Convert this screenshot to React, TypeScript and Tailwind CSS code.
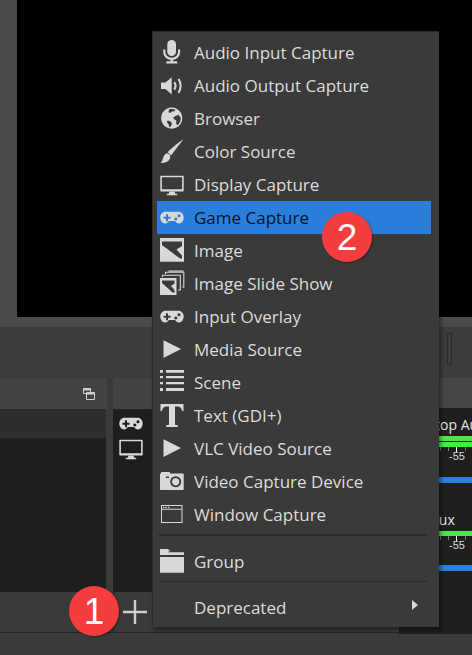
import React from 'react';

const fontFamily = "font-['Open_Sans','Noto_Sans',sans-serif]";

const Svg: React.FC<{ children: React.ReactNode; className?: string }> = ({ children, className }) => (
  <svg
    width="24"
    height="24"
    viewBox="0 0 24 24"
    className={`overflow-visible shrink-0 ${className ?? 'fill-[#d8d8d8]'}`}
  >
    {children}
  </svg>
);

const MicIcon = () => (
  <Svg>
    <rect x="7.3" y="-1" width="8.7" height="16" rx="4.3" />
    <path d="M4.3 8.5v2.5c0 4 3.2 6.8 7.4 6.8s7.4-2.8 7.4-6.8V8.5" fill="none" stroke="#d8d8d8" strokeWidth="2.2" />
    <rect x="10.6" y="17" width="2.2" height="4" />
    <rect x="6.3" y="20.3" width="11" height="2.2" rx="0.6" />
  </Svg>
);

const SpeakerIcon = () => (
  <Svg>
    <path d="M1 8.5h4.5L11.7 3.2v17.4L5.5 15H1z" />
    <path d="M14.2 8.2c1.6 2.2 1.6 5.2 0 7.4M18.4 4.8c3 4 3 10 0 14" fill="none" stroke="#d8d8d8" strokeWidth="2" />
  </Svg>
);

const GlobeIcon = () => (
  <Svg>
    <path
      fillRule="evenodd"
      d="M11.7 .5a10.6 10.6 0 1 0 .01 0zM9 2.5c2-.6 5-.6 6.5.3l-1.5 1.6-2-.2-1 1.5-2.5-.3zM15.5 9l3-1.2 2.2 2.7c.2 3-.8 5.7-3 7.6l-1.7-1.3.5-3-2-1.2-1.5-1.8zM7.5 13.5l2.8.7 1.7 2.3-1 2.5-1.5 1.5-1-3.5-1.5-1.5z"
    />
  </Svg>
);

const BrushIcon = () => (
  <Svg>
    <path d="M23.5-.8C19 5 14.5 11 11.2 15.2L7.6 12.2C12 8 18.5 2.2 23.5-.8z" />
    <path d="M6.6 13.2c2.4.2 4 1.8 3.6 4.3-.7 4-5 5.7-9.7 5.6 2.8-2 2-8 6.1-9.9z" />
  </Svg>
);

const MonitorIcon = () => (
  <Svg>
    <path
      fillRule="evenodd"
      d="M1 2.7h22a.7.7 0 0 1 .7.7v14.400a.7.7 0 0 1-.7.7H1a.7.7 0 0 1-.7-.7V3.400a.7.7 0 0 1 .7-.7zM1.900 4.200v12.100h20.200V4.200z"
    />
    <path d="M9.500 18.500h5l.8 2.300H8.700zM6.800 20.800h10.400v1.400H6.800z" />
  </Svg>
);

const GamepadIcon = () => (
  <Svg>
    <path
      fillRule="evenodd"
      d="M5.500 5.700h13c3 0 5.200 2.500 5.200 5.900s-2.200 5.900-4.700 5.900c-2 0-3-1.500-4-2.500H9c-1 1-2 2.500-4 2.500-2.500 0-4.700-2.500-4.700-5.900s2.200-5.900 5.200-5.900zM6 8.200v2.500H3.500v2h2.500v2.500h2v-2.500h2.500v-2H8V8.200zM19 8.200a1.600 1.600 0 1 0 .01 0zM15.800 11.400a1.600 1.600 0 1 0 .01 0z"
    />
  </Svg>
);

const ImageIcon = () => (
  <Svg>
    <path
      fillRule="evenodd"
      d="M0-1h24v23.700H0zM2 2.500v3.500L20 19.500h2v-3L16.500 10.500 22 7V2.500z"
    />
  </Svg>
);

const SlidesIcon = () => (
  <Svg>
    <path fillRule="evenodd" d="M0 6h16.500v17H0zM2 8.500v2.500L12.500 20.500h2v-2.500l-3.500-4 3.500-2.500V8.500z" />
    <path d="M2.500 5V3.200h17.800V18H18M5.500 2V.2h18.300V15h-1.600M8.500-1h15" fill="none" stroke="#d8d8d8" strokeWidth="1.100" />
  </Svg>
);

const PlayIcon = () => (
  <Svg>
    <path d="M3.500 2.300L21 11 3.500 20z" />
  </Svg>
);

const ListIcon = () => (
  <Svg>
    <path d="M0-1h3v2.700H0zM0 5h3v2.300H0zM0 11h3v2.300H0zM0 17h3v3H0z" />
    <path d="M6-1h18v2.700H6zM6 5h18v2.300H6zM6 11h18v2.300H6zM6 17h18v3H6z" />
  </Svg>
);

const TextIcon = () => (
  <Svg>
    <path d="M.5 0h23v7h-1.400c-.5-2.500-1.500-4.200-4-4.600H15v18.400l3 .6V23H6v-1.600l3-.6V2.400H5.900c-2.500.4-3.500 2.100-4 4.600H.5z" />
  </Svg>
);

const CameraIcon = () => (
  <Svg>
    <path
      fillRule="evenodd"
      d="M1 3.500V2.500c0-.4.3-.5.5-.5h8c.3 0 .5.2.5.5v1h13c.4 0 .7.3.7.7V19c0 .6-.4 1-1 1H1c-.6 0-1-.4-1-1V4.500c0-.6.4-1 1-1zM6 6.500v1.400h3V6.500zM15.700 6.200a5.500 5.500 0 1 0 .01 0zM15.700 8a3.700 3.700 0 1 1-.01 0z"
    />
  </Svg>
);

const WindowIcon = () => (
  <Svg>
    <rect x="1.500" y="2.500" width="20.500" height="17" fill="none" stroke="#d8d8d8" strokeWidth="1" />
    <path d="M1.500 6.200h20.500" stroke="#d8d8d8" strokeWidth="1" />
    <path d="M3 3.800h1.300v1.300H3zM5.500 3.800h1.300v1.300H5.500zM8 3.800h1.300v1.300H8z" />
  </Svg>
);

const FolderIcon = () => (
  <Svg>
    <path d="M0-1h8l2.500 2.600H8.700L7.500 2.200H24V5H0zM0 7h24v15.200c0 .3-.3.5-.5.5H.5c-.3 0-.5-.2-.5-.5z" />
  </Svg>
);

const menuItems: { label: string; icon: React.ReactNode }[] = [
  { label: 'Audio Input Capture', icon: <MicIcon /> },
  { label: 'Audio Output Capture', icon: <SpeakerIcon /> },
  { label: 'Browser', icon: <GlobeIcon /> },
  { label: 'Color Source', icon: <BrushIcon /> },
  { label: 'Display Capture', icon: <MonitorIcon /> },
  { label: 'Game Capture', icon: <GamepadIcon /> },
  { label: 'Image', icon: <ImageIcon /> },
  { label: 'Image Slide Show', icon: <SlidesIcon /> },
  { label: 'Input Overlay', icon: <GamepadIcon /> },
  { label: 'Media Source', icon: <PlayIcon /> },
  { label: 'Scene', icon: <ListIcon /> },
  { label: 'Text (GDI+)', icon: <TextIcon /> },
  { label: 'VLC Video Source', icon: <PlayIcon /> },
  { label: 'Video Capture Device', icon: <CameraIcon /> },
  { label: 'Window Capture', icon: <WindowIcon /> },
];

const MenuRow: React.FC<{ label: string; icon?: React.ReactNode; active?: boolean }> = ({ label, icon, active }) => (
  <div className={`flex h-[33px] items-center pl-[3px] ${active ? 'bg-[#2b7fdb] text-[#08131f]' : 'text-[#dcdcdc]'}`}>
    <div className="w-[24px] h-[24px] shrink-0">{icon}</div>
    <span className="ml-[10px] text-[17px] leading-none whitespace-nowrap">{label}</span>
  </div>
);

const Channel: React.FC<{ name: string; double?: boolean; top: string; nameClass: string; after: string }> = ({
  name,
  double,
  top,
  nameClass,
  after,
}) => (
  <div className={top}>
    <div className={`text-[14px] leading-[22px] text-[#e2e2e2] whitespace-nowrap ${nameClass}`}>{name}</div>
    <div className="flex flex-col gap-[1px]">
      <div className="h-[5px] bg-[#4be84b]" />
      {double && <div className="h-[5px] bg-[#4be84b]" />}
    </div>
    <div className="flex h-[4px] pl-[41px]">
      <div className="w-[1px] h-full bg-[#777]" />
      <div className="w-[1px] h-full ml-[7px] bg-[#777]" />
      <div className="w-[1px] h-[5px] ml-[7px] bg-white" />
      <div className="w-[1px] h-full ml-[8px] bg-[#777]" />
    </div>
    <div className="pl-[50px] mt-[1px] font-['Liberation_Sans',sans-serif] text-[11px] leading-[9px] text-[#d8d8d8]">
      -55
    </div>
    <div className={`h-[6px] bg-[#2b7fdb] ${after}`} />
  </div>
);

export default function App() {
  return (
    <div className={`relative w-[472px] h-[655px] overflow-hidden bg-[#3a3a3a] ${fontFamily}`}>
      {/* preview */}
      <div className="h-[327px] bg-[#4b4b4b] pl-[17px] pb-[10px]">
        <div className="h-full bg-black" />
      </div>

      {/* controls strip */}
      <div className="flex h-[51px] justify-end bg-[#3c3c3c] pt-[6px] pr-[20px]">
        <div className="w-[5px] h-[32px] border border-[#2a2a2a]" />
      </div>

      {/* docks */}
      <div className="flex h-[255px]">
        <div className="flex flex-col w-[113px] pr-[6px]">
          <div className="flex h-[31px] shrink-0 items-center justify-end bg-[#434343] pr-[12px]">
            <svg width="12" height="12" viewBox="0 0 12 12" fill="none" stroke="#d0d0d0">
              <path d="M.5.5h7v5h-7z" />
              <path d="M.5 1.500h7" strokeWidth="2" />
              <path d="M3.500 4.500h8v7h-8z" fill="#434343" />
              <path d="M3.500 5.500h8" strokeWidth="2" />
            </svg>
          </div>
          <div className="flex-1 flex flex-col mr-[1px] border-t border-[#262626] bg-[#1e1e1e]">
            <div className="h-[28px] bg-[#2e2e2e]" />
          </div>
          <div className="h-[41px] shrink-0 -mr-[6px] bg-[#3a3a3a] border-b border-[#252525]" />
        </div>

        <div className="flex flex-col w-[286px]">
          <div className="h-[31px] shrink-0 bg-[#434343]" />
          <div className="flex-1 flex flex-col gap-[1px] items-start border-t border-[#262626] bg-[#1e1e1e] pl-[6px] pt-[2px]">
            <GamepadIcon />
            <MonitorIcon />
          </div>
          <div className="flex h-[41px] shrink-0 items-center border-l border-b border-[#252525] bg-[#3a3a3a] pl-[9px]">
            <svg width="24" height="24" viewBox="0 0 24 24" stroke="#cfcfcf" strokeWidth="2.400">
              <path d="M0 12h24M12 0v24" />
            </svg>
          </div>
        </div>

        <div className="flex flex-col w-[73px]">
          <div className="h-[30px] shrink-0 bg-[#474747]" />
          <div className="flex-1 bg-[#1f1f1f] -mb-[1px] overflow-hidden">
            <Channel name="Desktop Audio" double top="pt-[6px]" nameClass="pl-[4px]" after="mt-[16px]" />
            <Channel name="Mic/Aux" top="pt-[26px]" nameClass="pl-[3px]" after="mt-[15px]" />
          </div>
        </div>
      </div>

      {/* Sources context menu */}
      <div className="absolute left-[152px] top-[31px] w-[287px] h-[596px] border-t border-l border-[#2b2b2b] bg-[#3a3a3a] pl-[4px] pr-[8px] pt-[4px] shadow-[2px_3px_4px_rgba(0,0,0,0.45)]">
        {menuItems.map((item) => (
          <MenuRow key={item.label} label={item.label} icon={item.icon} active={item.label === 'Game Capture'} />
        ))}
        <div className="h-[2px] mt-[3px] mb-[9px] ml-[2px] mr-[4px] bg-[#2a2a2a]" />
        <MenuRow label="Group" icon={<FolderIcon />} />
        <div className="h-[1px] mt-[3px] mb-[9px] ml-[2px] mr-[4px] bg-[#2a2a2a]" />
        <div className="relative">
          <MenuRow label="Deprecated" />
          <div className="absolute left-[255px] top-[9px] w-0 h-0 border-y-[5px] border-y-transparent border-l-[6px] border-l-[#d8d8d8]" />
        </div>
      </div>

      {/* step badges */}
      <div className="absolute left-[69px] top-[586px] flex w-[50px] h-[50px] items-center justify-center rounded-full bg-[#f53d3d] shadow-[1px_1px_2px_rgba(0,0,0,0.35)] font-['Liberation_Sans',sans-serif] text-[37px] leading-none text-white">
        1
      </div>
      <div className="absolute left-[322px] top-[212px] flex w-[50px] h-[50px] items-center justify-center rounded-full bg-[#f53d3d] shadow-[1px_1px_2px_rgba(0,0,0,0.35)] font-['Liberation_Sans',sans-serif] text-[37px] leading-none text-white">
        2
      </div>
    </div>
  );
}
